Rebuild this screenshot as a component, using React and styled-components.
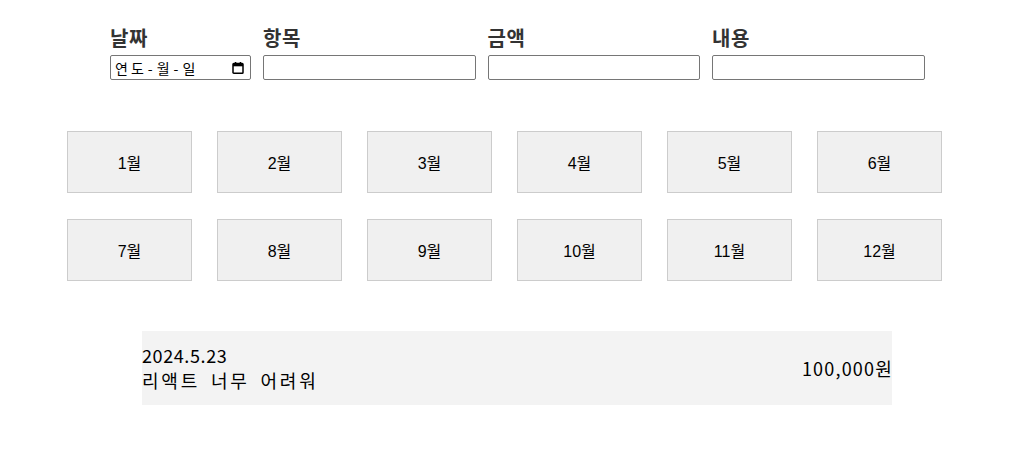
import React from "react";
import styled, { createGlobalStyle } from "styled-components";

const Global = createGlobalStyle`
  html, body { margin: 0; padding: 0; background: #fff; }
  body { font-family: "Noto Sans CJK KR", "Noto Sans", sans-serif; color: #000; }
`;

const Page = styled.div`
  width: 1017px;
  padding-top: 24px;
`;

const Form = styled.form`
  display: flex;
  gap: 12px;
  padding-left: 110px;
`;

const Field = styled.label`
  display: flex;
  flex-direction: column;
`;

const LabelText = styled.span`
  font-family: "Noto Sans CJK KR", sans-serif;
  font-weight: 700;
  font-size: 20px;
  line-height: 28px;
  color: #333;
  margin-bottom: 3px;
  letter-spacing: 0.5px;
`;

const Input = styled.input`
  box-sizing: border-box;
  width: ${(p) => p.$w}px;
  height: 25px;
  border: 1px solid #767676;
  border-radius: 2px;
  padding: 1px 2px;
  font-family: "Noto Sans CJK KR", sans-serif;
  font-size: 14px;
  background: #fff;
`;

const DateBox = styled.div`
  box-sizing: border-box;
  width: 141px;
  height: 25px;
  border: 1px solid #767676;
  border-radius: 2px;
  padding: 0 6px 0 4px;
  display: flex;
  align-items: center;
  background: #fff;
  cursor: text;
`;

const Segments = styled.div`
  display: flex;
  align-items: center;
  gap: 3px;
  flex: 1;
  font-family: "Noto Sans CJK KR", sans-serif;
  font-size: 14px;
  line-height: 1;
  color: #000;
`;

const Part = styled.span`
  padding: ${(p) => (p.$sep ? "0 1px" : "0")};
`;

const CalendarIcon = () => (
  <svg width="12" height="12" viewBox="0 0 12 12" aria-hidden="true">
    <rect x="1" y="1.5" width="10" height="9.7" rx="0.8" fill="none" stroke="#000" strokeWidth="1.5" />
    <rect x="1" y="1.5" width="10" height="2.8" fill="#000" />
    <rect x="2.8" y="0" width="1.5" height="2.3" fill="#000" />
    <rect x="7.7" y="0" width="1.5" height="2.3" fill="#000" />
  </svg>
);

const Months = styled.div`
  display: grid;
  grid-template-columns: repeat(6, 125px);
  grid-auto-rows: 62px;
  column-gap: 25px;
  row-gap: 26px;
  padding-left: 67px;
  margin-top: 51px;
`;

const MonthButton = styled.button`
  box-sizing: border-box;
  background: #f0f0f0;
  border: 1px solid #cccccc;
  font-family: "Liberation Sans", "Noto Sans CJK KR", sans-serif;
  font-size: 16px;
  color: #000;
  cursor: pointer;
  padding: 0;
`;

const Entry = styled.div`
  box-sizing: border-box;
  width: 750px;
  height: 74px;
  margin: 50px 0 0 142px;
  background: #f3f3f3;
  display: flex;
  align-items: center;
  justify-content: space-between;
`;

const EntryInfo = styled.div`
  display: flex;
  flex-direction: column;
  font-size: 18px;
  line-height: 25px;
`;

const EntryDate = styled.span`
  letter-spacing: 0.6px;
`;

const EntryText = styled.span`
  letter-spacing: 2.8px;
  word-spacing: 4px;
`;

const Amount = styled.div`
  font-size: 18px;
  letter-spacing: 1.2px;
  margin-right: -1px;
`;

const months = Array.from({ length: 12 }, (_, i) => `${i + 1}월`);
const dateParts = ["연", "도", "-", "월", "-", "일"];

export default function App() {
  return (
    <Page>
      <Global />
      <Form onSubmit={(e) => e.preventDefault()}>
        <Field>
          <LabelText>날짜</LabelText>
          <DateBox role="textbox" aria-label="날짜">
            <Segments>
              {dateParts.map((p, i) => (
                <Part key={i} $sep={p === "-"}>
                  {p}
                </Part>
              ))}
            </Segments>
            <CalendarIcon />
          </DateBox>
        </Field>
        <Field>
          <LabelText>항목</LabelText>
          <Input type="text" $w={212.5} />
        </Field>
        <Field>
          <LabelText>금액</LabelText>
          <Input type="text" $w={212.5} />
        </Field>
        <Field>
          <LabelText>내용</LabelText>
          <Input type="text" $w={212.5} />
        </Field>
      </Form>
      <Months>
        {months.map((m) => (
          <MonthButton key={m}>{m}</MonthButton>
        ))}
      </Months>
      <Entry>
        <EntryInfo>
          <EntryDate>2024.5.23</EntryDate>
          <EntryText>리액트 너무 어려워</EntryText>
        </EntryInfo>
        <Amount>100,000원</Amount>
      </Entry>
    </Page>
  );
}
